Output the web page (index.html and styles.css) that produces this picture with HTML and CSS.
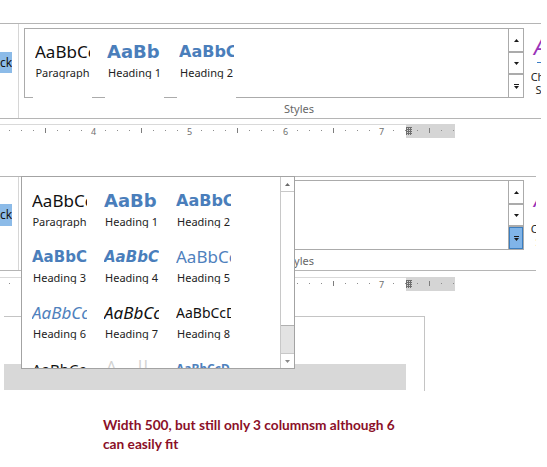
FILE: index.html
```html
<!DOCTYPE html>
<html lang="en">
<head>
  <meta charset="utf-8">
  <title>Styles gallery</title>
  <link rel="stylesheet" href="styles.css">
</head>
<body>
  <div class="shot">

    <!-- ribbon as it normally looks -->
    <div class="section">
      <div class="ribbon">
        <div class="stub">ck</div>
        <div class="sep"></div>
        <div class="group">
          <div class="group-row">
            <div class="gallery">
              <div class="gal-items">
                <div class="item"><div class="sw s-para">AaBbCc</div><div class="lb">Paragraph</div></div>
                <div class="item"><div class="sw s-h1">AaBb</div><div class="lb">Heading 1</div></div>
                <div class="item"><div class="sw s-h2">AaBbC</div><div class="lb">Heading 2</div></div>
              </div>
              <div class="gal-scroll">
                <div class="gbtn"><svg width="5" height="3" viewBox="0 0 5 3"><path d="M0 3L2.5 0L5 3Z" fill="#1a1a1a"/></svg></div>
                <div class="gbtn"><svg width="5" height="3" viewBox="0 0 5 3"><path d="M0 0H5L2.5 3Z" fill="#1a1a1a"/></svg></div>
                <div class="gbtn"><svg width="5" height="5" viewBox="0 0 5 5"><rect x="0" y="0" width="5" height="1" fill="#1a1a1a"/><path d="M0 2H5L2.5 5Z" fill="#1a1a1a"/></svg></div>
              </div>
            </div>
            <div class="change">
              <div class="change-a">A</div>
              <div class="change-line"></div>
              <div class="change-txt">Change<br>Styles</div>
            </div>
          </div>
          <div class="group-label">Styles</div>
        </div>
      </div>
      <div class="ruler">
        <span class="rnum">4</span><span class="rnum">5</span><span class="rnum">6</span><span class="rnum">7</span>
        <svg class="rmark" width="6" height="8" viewBox="0 0 6 8">
          <path d="M0 .5H6M0 2.5H6M0 4.5H6M0 6.5H6M.5 0V8M2.5 0V8M4.5 0V8" stroke="#6e6e6e" stroke-width="1" fill="none"/>
        </svg>
      </div>
    </div>

    <!-- same ribbon with the gallery dropped down -->
    <div class="section section-b">
      <div class="ribbon">
        <div class="stub">ck</div>
        <div class="sep"></div>
        <div class="group">
          <div class="group-row">
            <div class="gallery">
              <div class="gal-items">
                <div class="item"><div class="sw s-para">AaBbCc</div><div class="lb">Paragraph</div></div>
                <div class="item"><div class="sw s-h1">AaBb</div><div class="lb">Heading 1</div></div>
                <div class="item"><div class="sw s-h2">AaBbC</div><div class="lb">Heading 2</div></div>
              </div>
              <div class="gal-scroll">
                <div class="gbtn"><svg width="5" height="3" viewBox="0 0 5 3"><path d="M0 3L2.5 0L5 3Z" fill="#1a1a1a"/></svg></div>
                <div class="gbtn"><svg width="5" height="3" viewBox="0 0 5 3"><path d="M0 0H5L2.5 3Z" fill="#1a1a1a"/></svg></div>
                <div class="gbtn on"><svg width="5" height="5" viewBox="0 0 5 5"><rect x="0" y="0" width="5" height="1" fill="#1a1a1a"/><path d="M0 2H5L2.5 5Z" fill="#1a1a1a"/></svg></div>
              </div>
            </div>
            <div class="change">
              <div class="change-a">A</div>
              <div class="change-line"></div>
              <div class="change-txt">Change<br>Styles</div>
            </div>
          </div>
          <div class="group-label">Styles</div>
        </div>
      </div>
      <div class="ruler">
        <span class="rnum">4</span><span class="rnum">5</span><span class="rnum">6</span><span class="rnum">7</span>
        <svg class="rmark" width="6" height="8" viewBox="0 0 6 8">
          <path d="M0 .5H6M0 2.5H6M0 4.5H6M0 6.5H6M.5 0V8M2.5 0V8M4.5 0V8" stroke="#6e6e6e" stroke-width="1" fill="none"/>
        </svg>
      </div>

      <div class="page">
        <div class="band"></div>
      </div>

      <div class="dropdown">
        <div class="dd-items">
          <div class="item"><div class="sw s-para">AaBbCc</div><div class="lb">Paragraph</div></div>
          <div class="item"><div class="sw s-h1">AaBb</div><div class="lb">Heading 1</div></div>
          <div class="item"><div class="sw s-h2">AaBbC</div><div class="lb">Heading 2</div></div>
          <div class="item"><div class="sw s-h3">AaBbC</div><div class="lb">Heading 3</div></div>
          <div class="item"><div class="sw s-h4">AaBbC</div><div class="lb">Heading 4</div></div>
          <div class="item"><div class="sw s-h5">AaBbCc</div><div class="lb">Heading 5</div></div>
          <div class="item"><div class="sw s-h6">AaBbCc</div><div class="lb">Heading 6</div></div>
          <div class="item"><div class="sw s-h7">AaBbCc</div><div class="lb">Heading 7</div></div>
          <div class="item"><div class="sw s-h8">AaBbCcD</div><div class="lb">Heading 8</div></div>
          <div class="item"><div class="sw s-h9">AaBbCc</div><div class="lb">Heading 9</div></div>
          <div class="item"><div class="sw s-title">A&nbsp;&nbsp;&nbsp;ll</div><div class="lb">Title</div></div>
          <div class="item"><div class="sw s-sub">AaBbCcD</div><div class="lb">Subtitle</div></div>
        </div>
        <div class="dd-bar">
          <div class="dd-btn"><svg width="5" height="3" viewBox="0 0 5 3"><path d="M0 3L2.5 0L5 3Z" fill="#6a6a6a"/></svg></div>
          <div class="dd-thumb"></div>
          <div class="dd-track"></div>
          <div class="dd-btn dd-down"><svg width="5" height="3" viewBox="0 0 5 3"><path d="M0 0H5L2.5 3Z" fill="#8a8a8a"/></svg></div>
        </div>
      </div>
    </div>

    <p class="note">Width 500, but still only 3 columnsm although 6 can easily fit</p>
  </div>
</body>
</html>
```

FILE: styles.css
```css
* {
  box-sizing: border-box;
}
body {
  margin: 0;
  background: #fff;
  font-family: "Noto Sans", "DejaVu Sans", sans-serif;
  color: #1e1e1e;
}
.shot {
  width: 547px;
  height: 467px;
  overflow: hidden;
}

/* ribbon */
.ribbon {
  display: flex;
  width: 541px;
  margin-top: 23px;
  border-top: 1px solid #b5b5b5;
  border-bottom: 1px solid #b5b5b5;
  overflow: hidden;
}
.stub {
  flex: none;
  width: 12px;
  height: 21px;
  margin-top: 28px;
  background: #8cbbe8;
  font-size: 12px;
  line-height: 21px;
  text-align: right;
  white-space: nowrap;
  overflow: hidden;
  color: #111;
}
.sep {
  flex: none;
  width: 1px;
  margin-left: 6px;
  background: #d6d6d6;
}
.group {
  flex: none;
  width: 550px;
  margin-left: 5px;
  padding-bottom: 2px;
}
.group-row {
  display: flex;
  margin-top: 4px;
}
.group-label {
  margin-top: 4px;
  font-size: 11px;
  line-height: 14px;
  text-align: center;
  color: #676767;
}

.gallery {
  flex: none;
  display: flex;
  width: 500px;
  height: 70px;
  border: 1px solid #ababab;
}
.gal-items {
  flex: 1;
  display: flex;
  gap: 13px;
  padding-left: 8px;
}
/* the items run over the bottom border, as in the real control */
.gallery .item {
  height: 69px;
}
.gallery .sw {
  margin-top: 9px;
}
.gal-scroll {
  flex: none;
  width: 15px;
  display: flex;
  flex-direction: column;
  border-left: 1px solid #ababab;
}
.gbtn {
  display: flex;
  align-items: center;
  justify-content: center;
  height: 23px;
  border-bottom: 1px solid #ababab;
}
.gbtn + .gbtn {
  height: 22px;
  border-top: 1px solid #ababab;
}
.gbtn:last-child {
  height: 23px;
  border-bottom: none;
}
.gbtn.on {
  background: #80b4e8;
  box-shadow: inset 0 0 0 1px #3c7ebf;
}

.change {
  flex: none;
  width: 49px;
  margin-left: 2px;
  padding-top: 6px;
  text-align: center;
  font-size: 11px;
  line-height: 13px;
  color: #262626;
}
.change-a {
  height: 24px;
  padding-left: 8px;
  text-align: left;
  font-size: 22px;
  line-height: 24px;
  font-style: italic;
  color: #9a33b8;
}
.change-line {
  width: 5px;
  height: 1px;
  margin: 4px 0 0 11px;
  background: #3a7cc5;
}
.change-txt {
  margin-top: 7px;
}

/* style items */
.item {
  flex: none;
  width: 59px;
  background: #fff;
}
.sw {
  height: 28px;
  margin: 10px 2px 0;
  line-height: 28px;
  font-size: 17px;
  white-space: nowrap;
  overflow: hidden;
  color: #111;
}
.lb {
  height: 13px;
  line-height: 14px;
  font-size: 11px;
  text-align: center;
  white-space: nowrap;
  overflow: hidden;
  color: #222;
}
.s-h1, .s-h2, .s-h3, .s-h4 {
  font-family: "DejaVu Sans", sans-serif;
  font-weight: bold;
  color: #4a7ebb;
}
.s-h1 { font-size: 18px; }
.s-h2 { font-size: 16px; }
.s-h3 { font-size: 15px; }
.s-h4 { font-size: 15px; font-style: italic; }
.s-h5 { color: #4f81bd; }
.s-h6 { color: #4f81bd; font-style: italic; }
.s-h7 { font-style: italic; }
.s-h8 { font-size: 14px; }
.s-h9 { font-size: 15px; }
.s-title { font-size: 24px; font-weight: 300; color: #d2d2d2; }
.s-sub { font-size: 12px; font-weight: bold; color: #4f81bd; }

/* ruler */
.ruler {
  display: flex;
  align-items: center;
  width: 455px;
  height: 14px;
  margin-top: 5px;
  padding-left: 89px;
  background:
    linear-gradient(#d9d9d9, #d9d9d9) 0 0 / 406px 1px no-repeat,
    linear-gradient(to right, transparent 45px, #7d7d7d 45px 46px, transparent 46px) 0 4px / 96px 5px repeat-x,
    linear-gradient(to right, transparent 9px, #8c8c8c 9px 10px, transparent 10px) 0 6px / 12px 1px repeat-x,
    linear-gradient(to right, #fff 406px, #d5d5d5 406px);
}
.rnum {
  width: 9px;
  background: #fff;
  font-size: 9px;
  line-height: 11px;
  text-align: center;
  color: #6f6f6f;
}
.rnum + .rnum {
  margin-left: 87px;
}
.rmark {
  margin-left: 20px;
}

/* dropped down gallery */
.section-b {
  position: relative;
  margin-top: 38px;
}
.section-b .ribbon {
  width: 536px;
  margin-top: 0;
}
.section-b .stub {
  margin-top: 27px;
  height: 22px;
}
.section-b .group-row {
  margin-top: 3px;
}
.section-b .ruler {
  margin-top: 6px;
}

.page {
  width: 421px;
  height: 75px;
  margin: 25px 0 0 4px;
  border-top: 1px solid #c4c4c4;
  border-right: 1px solid #c4c4c4;
  padding-top: 47px;
}
.band {
  width: 402px;
  height: 26px;
  background: #d8d8d8;
}

.dropdown {
  position: absolute;
  left: 21px;
  top: 0;
  display: flex;
  width: 274px;
  height: 193px;
  border: 1px solid #a3a3a3;
  background: #fff;
}
.dd-items {
  flex: 1;
  display: grid;
  grid-template-columns: repeat(3, 59px);
  grid-auto-rows: 56px;
  column-gap: 13px;
  align-content: start;
  padding-left: 8px;
  overflow: hidden;
}
.dd-bar {
  flex: none;
  display: flex;
  flex-direction: column;
  width: 14px;
  border-left: 1px solid #c8c8c8;
}
.dd-btn {
  display: flex;
  align-items: center;
  justify-content: center;
  height: 15px;
  border-bottom: 1px solid #c8c8c8;
}
.dd-thumb {
  height: 134px;
  border-bottom: 1px solid #b0b0b0;
}
.dd-track {
  flex: 1;
  background: #e3e3e3;
}
.dd-down {
  border-bottom: none;
  border-top: 1px solid #c8c8c8;
}

.note {
  width: 312px;
  margin: 24px 0 0 103px;
  font-family: Lato, "Liberation Sans", sans-serif;
  font-weight: bold;
  font-size: 13.7px;
  line-height: 19px;
  color: #8b1028;
}
```
